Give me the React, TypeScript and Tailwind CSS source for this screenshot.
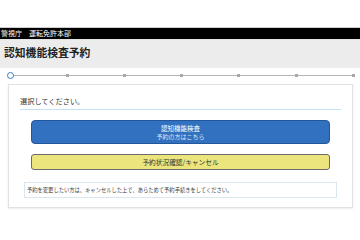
export default function App() {
  const dots = [67, 124, 181, 238, 296, 353];
  return (
    <div className="w-[360px] h-[240px] bg-white overflow-hidden relative" style={{ fontFamily: '"Noto Sans CJK JP", "Noto Sans", sans-serif' }}>
      <div className="h-[27px] bg-white" />
      <div className="h-[12px] bg-black border-t border-[#cfcfcf] flex items-center px-[1px] text-white text-[7px] leading-none">
        <span>警視庁</span>
        <span className="ml-[7px]">運転免許本部</span>
      </div>
      <div className="h-[29px] bg-[#ececec] border-t border-[#e4e4e4] flex items-center px-[4px] pb-[4px]">
        <span className="text-[10.8px] font-bold text-[#222] leading-none">認知機能検査予約</span>
      </div>
      <div className="relative h-[16px]">
        <div className="absolute left-[10px] w-[343px] top-[7px] h-[1px] bg-[#b5b5b5]" />
        <div className="absolute left-[7px] top-[4px] w-[7px] h-[7px] rounded-full border border-[#3a7bc8] bg-white" />
        {dots.map((x) => (
          <div key={x} className="absolute top-[6px] w-[3px] h-[3px] bg-[#a8a8a8]" style={{ left: x - 1 }} />
        ))}
      </div>
      <div className="ml-[8px] w-[345px] h-[124px] border border-[#e2e2e2] shadow-[0_1px_2px_rgba(0,0,0,0.08)] bg-white pt-[12px] px-[10px]">
        <div className="text-[7.2px] text-[#333] leading-none pb-[4px] pt-[1px] border-b border-[#c4e2f5] mx-[1px]">選択してください。</div>
        <div className="mt-[10px] mx-[12px] h-[24px] rounded-[4px] bg-[#3270c0] border border-[#24579a] flex flex-col items-center justify-center gap-[1px] text-white">
          <span className="text-[6.5px] leading-[8px]">認知機能検査</span>
          <span className="text-[6px] leading-[8px] text-[#dbe7f6]">予約の方はこちら</span>
        </div>
        <div className="mt-[10px] mx-[12px] h-[16px] rounded-[3px] bg-[#ece57d] border border-[#6b6b6b] flex items-center justify-center text-[6.7px] text-[#333] leading-none">
          予約状況確認/キャンセル
        </div>
        <div className="mt-[12px] mx-[5px] h-[16px] border border-[#dbe7ee] flex items-center px-[2px] text-[#444] leading-none">
          <span className="text-[6px] inline-block whitespace-nowrap origin-left scale-x-[0.88]">予約を変更したい方は、キャンセルした上で、あらためて予約手続きをしてください。</span>
        </div>
      </div>
    </div>
  );
}
